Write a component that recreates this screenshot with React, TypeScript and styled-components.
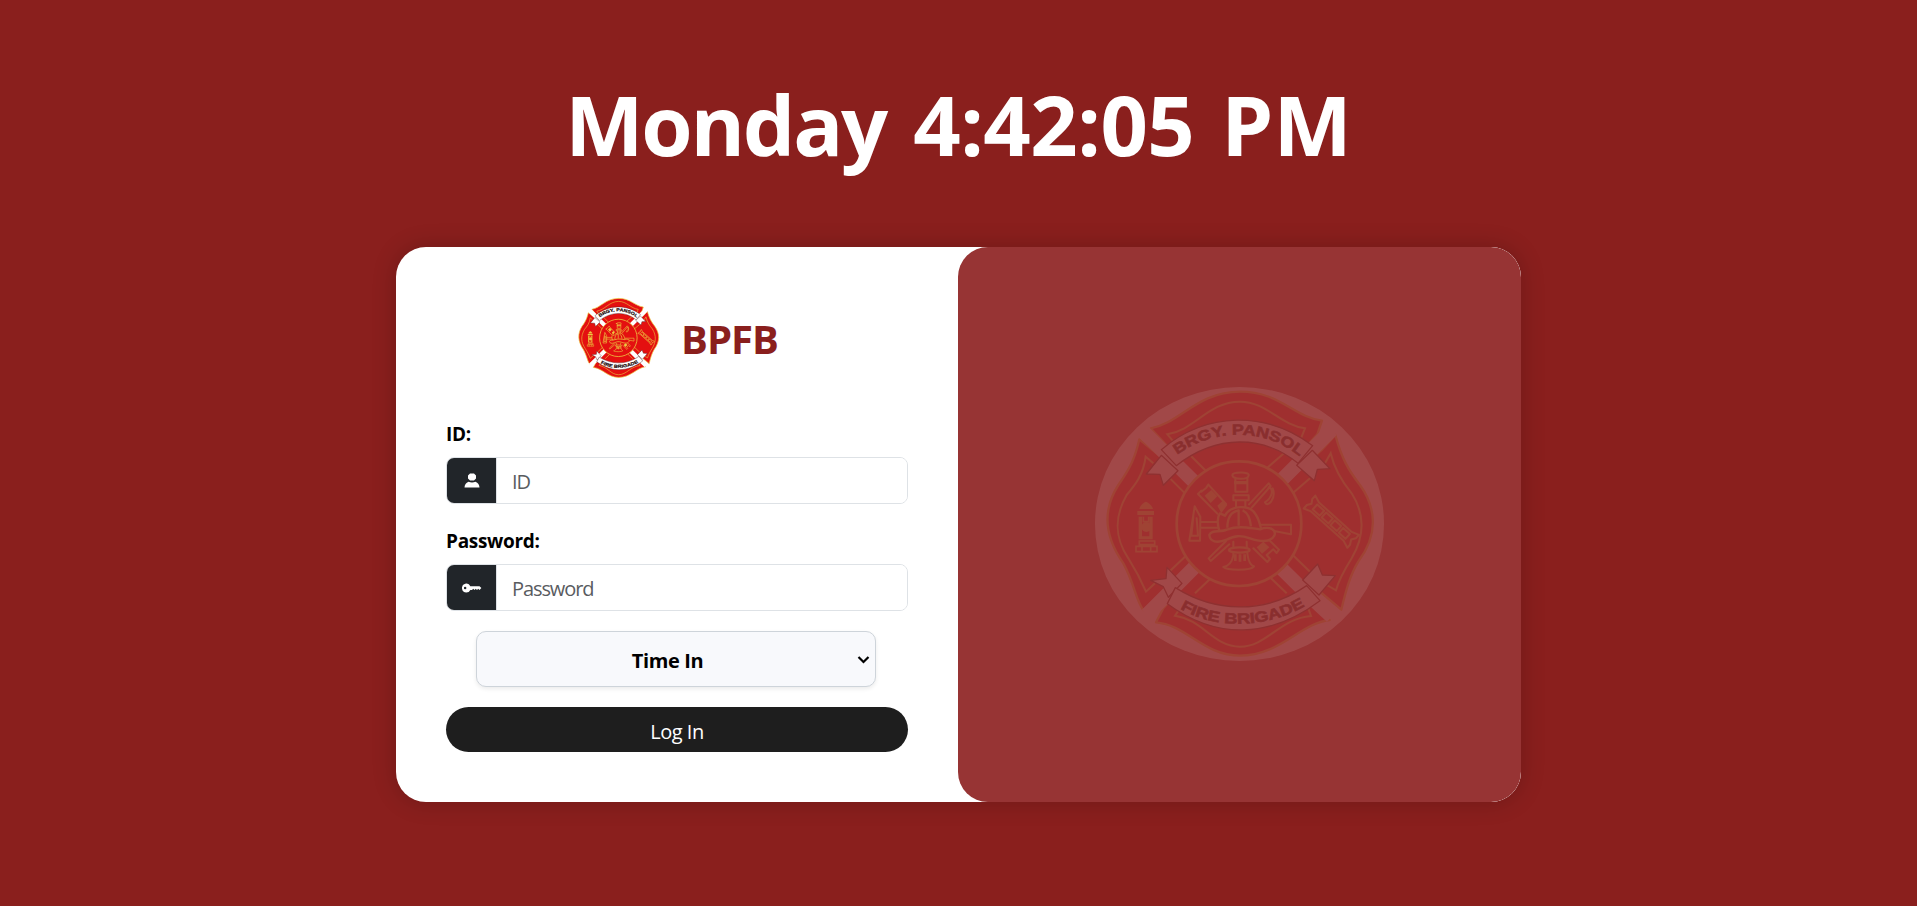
import React from 'react';
import styled, { createGlobalStyle } from 'styled-components';

const GlobalStyle = createGlobalStyle`
  *, *::before, *::after { box-sizing: border-box; }
  body {
    margin: 0;
    background: #8a1f1d;
    font-family: 'Open Sans', 'Noto Sans', sans-serif;
  }
`;

const Page = styled.main`
  height: 906px;
  display: flex;
  flex-direction: column;
  align-items: center;
  overflow: hidden;
`;

const Clock = styled.h1`
  margin: 68px 0 0;
  height: 179px;
  line-height: 112px;
  font-size: 83px;
  font-weight: 700;
  color: #fff;
  white-space: nowrap;
`;

const ClockPart = styled.span<{ $tracking?: number; $gap?: number }>`
  letter-spacing: ${(p) => p.$tracking ?? 0}px;
  margin-right: ${(p) => p.$gap ?? 0}px;
`;

const Card = styled.section`
  width: 1125px;
  height: 555px;
  display: flex;
  background: #fff;
  border-radius: 30px;
  overflow: hidden;
  box-shadow: 0 0 24px rgba(0, 0, 0, 0.2);
`;

const FormSide = styled.form`
  width: 562px;
  padding: 50px 50px;
  display: flex;
  flex-direction: column;
`;

const BrandSide = styled.aside`
  flex: 1;
  display: flex;
  align-items: center;
  justify-content: center;
  padding-bottom: 1px;
  background: #973434;
  border-radius: 30px;
`;

const Brand = styled.header`
  display: flex;
  align-items: center;
  height: 82px;
  padding-left: 129px;
  gap: 19px;
`;

const BrandName = styled.h2`
  margin: 1px 0 0;
  font-size: 40px;
  line-height: 54px;
  font-weight: 700;
  letter-spacing: -1px;
  color: #8a1f1d;
`;

const EmblemSvg = styled.svg<{ $faded?: boolean }>`
  display: block;
  flex: none;
  width: ${(p) => (p.$faded ? 289 : 87)}px;
  height: ${(p) => (p.$faded ? 274 : 82)}px;
  opacity: ${(p) => (p.$faded ? 0.1 : 1)};
  clip-path: ${(p) => (p.$faded ? 'ellipse(50% 50%)' : 'none')};
`;

const Label = styled.label<{ $top: number }>`
  margin-top: ${(p) => p.$top}px;
  height: 30px;
  margin-bottom: 8px;
  line-height: 30px;
  font-size: 19px;
  font-weight: 700;
  letter-spacing: -0.3px;
  color: #000;
`;

const InputGroup = styled.div`
  display: flex;
  height: 47px;
  border: 1px solid #dee2e6;
  border-radius: 8px;
  overflow: hidden;
`;

const IconCell = styled.span`
  width: 50px;
  display: flex;
  align-items: center;
  justify-content: center;
  padding-left: 1px;
  background: #212529;
  border-right: 1px solid #dee2e6;
`;

const Input = styled.input`
  flex: 1;
  min-width: 0;
  border: 0;
  outline: 0;
  padding: 2px 15px 0;
  background: #fff;
  font: 400 20px 'Open Sans', 'Noto Sans', sans-serif;
  &::placeholder { color: #595c5f; opacity: 1; letter-spacing: -1.1px; }
`;

const ModePicker = styled.button`
  display: flex;
  align-items: center;
  width: 400px;
  height: 56px;
  margin: 20px 0 0 30px;
  padding: 0 5px 0 1px;
  border: 1px solid #ced4da;
  border-radius: 10px;
  background: #f8f9fc;
  box-shadow: 0 2px 4px rgba(0, 0, 0, 0.08);
  color: #000;
  font: 700 20px 'Open Sans', 'Noto Sans', sans-serif;
  letter-spacing: -0.4px;
`;

const ModeText = styled.span`
  flex: 1;
  padding: 3px 0 0;
  text-align: center;
`;

const Submit = styled.button`
  height: 45px;
  margin-top: 20px;
  padding: 3px 0 0;
  border: 0;
  border-radius: 23px;
  background: #1e1e1e;
  color: #fff;
  font: 400 20px 'Open Sans', 'Noto Sans', sans-serif;
  letter-spacing: -0.5px;
`;

const RED = '#e41010';
const GOLD = '#ecc840';

function Emblem({ id, faded }: { id: string; faded?: boolean }) {
  return (
    <EmblemSvg $faded={faded} viewBox="45 36 867 822" preserveAspectRatio="none" aria-label="Brgy. Pansol Fire Brigade">
      <rect x="45" y="36" width="867" height="822" fill="#fff" />

      {/* four lobes of the cross */}
      <g fill={RED} stroke={GOLD} strokeWidth="7" strokeLinejoin="round">
        <path d="M212 160C300 145 350 50 480 50C600 50 640 125 726 137L712 178L477 446Z" />
        <path d="M228 742L250 700L477 446L749 735C660 745 600 842 480 842C370 842 320 750 228 742Z" />
        <path d="M178 193L230 235L477 446L190 706C165 670 165 630 130 565C70 480 70 400 115 330C150 280 165 250 178 193Z" />
        <path d="M766 180L725 225L477 446L784 704C797 650 810 600 835 560C895 480 890 400 840 330C805 285 785 250 766 180Z" />
      </g>
      <g fill="none" stroke={GOLD} strokeWidth="6">
        <path d="M285 205L262 178C345 165 385 80 480 80C560 80 600 150 675 160L663 190" />
        <path d="M300 700L285 722C370 735 400 815 480 815C560 815 600 730 693 723L685 700" />
        <path d="M220 265L197 245C190 300 165 330 140 360C100 430 105 490 145 550C170 590 185 620 198 650L225 625" />
        <path d="M735 265L752 235C765 290 790 325 815 355C860 425 850 490 815 550C790 590 775 620 768 646L740 630" />
      </g>

      {/* crossing white bars */}
      <g stroke={RED} strokeWidth="88">
        <path d="M265 245L680 655M680 245L275 655" />
      </g>
      <g stroke={GOLD} strokeWidth="6">
        <path d="M330 240L378 288M270 310L318 358M612 235L562 278M690 310L638 355M318 542L270 588M390 612L345 655M638 540L690 590M570 607L620 655" />
      </g>
      <g stroke="#fff" strokeWidth="42">
        <path d="M185 165L700 675M755 165L200 720M690 665L755 725" />
      </g>

      <circle cx="477" cy="446" r="187" fill={RED} stroke={GOLD} strokeWidth="8" />

      {/* ladder, pike pole, axe and trumpet crossed behind the helmet */}
      <g fill="none" stroke={GOLD} strokeWidth="6" strokeLinejoin="round" strokeLinecap="round">
        <path d="M354 357L412 416M385 329L438 387M354 357L364 347M385 329L379 338L364 350" />
        <path d="M520 520L562 561L570 552L560 540L580 523L590 534L597 524L556 484" />
        <path d="M507 388L566 325L572 333L515 398M566 337C580 340 580 365 555 382C562 400 590 370 578 340M438 498L386 550L392 558L448 508" />
        <path d="M344 394L361 425L360 497H328ZM361 441H418M361 458H416M340 425L334 482H354L350 430" />
        <path d="M545 449H633V478L565 465" />
        <path d="M466 308V350H502V308M460 361H506V376H460ZM468 376V398M496 376V400M457 301C457 290 510 290 506 301C504 315 460 315 457 301Z" />
        <path d="M460 500V542C455 566 442 574 430 576C440 586 512 588 522 574C508 570 500 550 500 500" />
      </g>
      <g fill={GOLD}>
        <path d="M374 362L394 345L412 364L392 384ZM412 392L430 376L442 390L424 414ZM530 517L550 500L568 517L546 536Z" />
        <path d="M462 318H502V328H462ZM462 538H470V558H462ZM476 538H484V560H476ZM490 538H498V558H490Z" />
      </g>
      <g fill={RED} stroke={GOLD} strokeWidth="7" strokeLinejoin="round">
        <path d="M418 468C410 440 412 425 420 415L435 422C450 392 510 385 528 420C538 435 540 450 545 468Z" />
        <path d="M388 480C395 462 420 474 440 464C480 450 510 460 540 463C570 452 590 465 583 482C570 505 540 500 510 490C480 480 465 482 440 494C410 506 390 500 388 480Z" />
        <path d="M442 458C442 430 452 410 476 406V452M488 406C505 415 510 430 513 454" fill="none" />
        <ellipse cx="478" cy="525" rx="31" ry="8" />
      </g>

      {/* hydrant */}
      <g fill={GOLD}>
        <path d="M178 402C182 388 192 382 198 380C207 384 217 392 219 402ZM172 408H222V420H172ZM176 425H186V490H176ZM208 425H218V490H208ZM176 484H218V493H176Z" />
        <circle cx="199" cy="456" r="15" />
      </g>
      <path d="M178 498H224V509H178ZM168 514H231V530H168ZM186 514V530M212 514V530M190 425V440H206V425" fill="none" stroke={GOLD} strokeWidth="5" />

      {/* ladder on the right lobe */}
      <g transform="translate(754 440) rotate(42)" fill="none" stroke={GOLD} strokeWidth="6" strokeLinejoin="round">
        <path d="M-88 -26L-66 -18H66L88 -26V-12L80 0L88 14V26L66 18H-66L-88 26V12L-80 0L-88 -12Z" />
        <path d="M-66 -10H-38V10H-66ZM-30 -10H-3V10H-30ZM5 -10H31V10H5ZM39 -10H66V10H39Z" />
      </g>

      {/* ribbons */}
      <g fill="#fff" stroke="#4a1818" strokeWidth="4" strokeLinejoin="round">
        <path d="M244 241L294 287L250 331L240 298L199 297Z" />
        <path d="M697 226L750 281L712 283L703 317L650 271Z" />
        <path d="M261 577L306 625L265 667L250 635L212 616L258 611Z" />
        <path d="M713 567L727 600L766 602L717 660L668 615Z" />
        <path d="M244 224C380 108 560 108 698 212L654 265C550 180 410 177 289 272Z" />
        <path d="M286 638C400 710 550 722 680 632L720 677C570 790 410 795 262 686Z" />
      </g>
      <path id={`${id}-top`} d="M291 240C400 160 550 158 655 241" fill="none" />
      <path id={`${id}-bottom`} d="M300 701C400 762 560 763 678 691" fill="none" />
      <g fill="#180808" fontFamily="'Liberation Sans', Arial, sans-serif" fontWeight="700" fontSize="44" stroke="#180808" strokeWidth="2">
        <text textLength="396" lengthAdjust="spacingAndGlyphs">
          <textPath href={`#${id}-top`} textLength="396" lengthAdjust="spacingAndGlyphs">BRGY. PANSOL</textPath>
        </text>
        <text textLength="392" lengthAdjust="spacingAndGlyphs">
          <textPath href={`#${id}-bottom`} textLength="392" lengthAdjust="spacingAndGlyphs">FIRE BRIGADE</textPath>
        </text>
      </g>
    </EmblemSvg>
  );
}

const PersonIcon = () => (
  <svg width="16" height="15" viewBox="0 0 16 15" fill="#fff">
    <path d="M6 .5h4l2 2v3l-2 2H6l-2-2v-3ZM4.500 8.800q3.500 1.200 7 0C14 10 15.500 12 15.500 14.500H.5C.5 12 2 10 4.500 8.800Z" />
  </svg>
);

const KeyIcon = () => (
  <svg width="20" height="20" viewBox="0 0 16 16" fill="#fff">
    <path d="M3.500 11.500a3.500 3.500 0 1 1 3.163-5H14L15.500 8 14 9.500l-1-1-1 1-1-1-1 1-1-1-1 1H6.663a3.500 3.500 0 0 1-3.163 2M2.500 9a1 1 0 1 0 0-2 1 1 0 0 0 0 2" />
  </svg>
);

const ChevronIcon = () => (
  <svg width="13" height="9" viewBox="0 0 13 9" fill="none" stroke="#000" strokeWidth="2.200">
    <path d="M1.500 2L6.500 7L11.500 2" />
  </svg>
);

export default function App() {
  return (
    <Page>
      <GlobalStyle />
      <Clock>
        <ClockPart $tracking={-2.2} $gap={5.5}>Monday</ClockPart>{' '}
        <ClockPart $tracking={-0.5} $gap={5.5}>4:42:05</ClockPart>{' '}
        <ClockPart>PM</ClockPart>
      </Clock>
      <Card>
        <FormSide onSubmit={(e) => e.preventDefault()}>
          <Brand>
            <Emblem id="logo" />
            <BrandName>BPFB</BrandName>
          </Brand>
          <Label $top={40} htmlFor="user-id">ID:</Label>
          <InputGroup>
            <IconCell><PersonIcon /></IconCell>
            <Input id="user-id" placeholder="ID" />
          </InputGroup>
          <Label $top={22} htmlFor="password">Password:</Label>
          <InputGroup>
            <IconCell><KeyIcon /></IconCell>
            <Input id="password" type="password" placeholder="Password" />
          </InputGroup>
          <ModePicker type="button">
            <ModeText>Time In</ModeText>
            <ChevronIcon />
          </ModePicker>
          <Submit type="submit">Log In</Submit>
        </FormSide>
        <BrandSide>
          <Emblem id="watermark" faded />
        </BrandSide>
      </Card>
    </Page>
  );
}
